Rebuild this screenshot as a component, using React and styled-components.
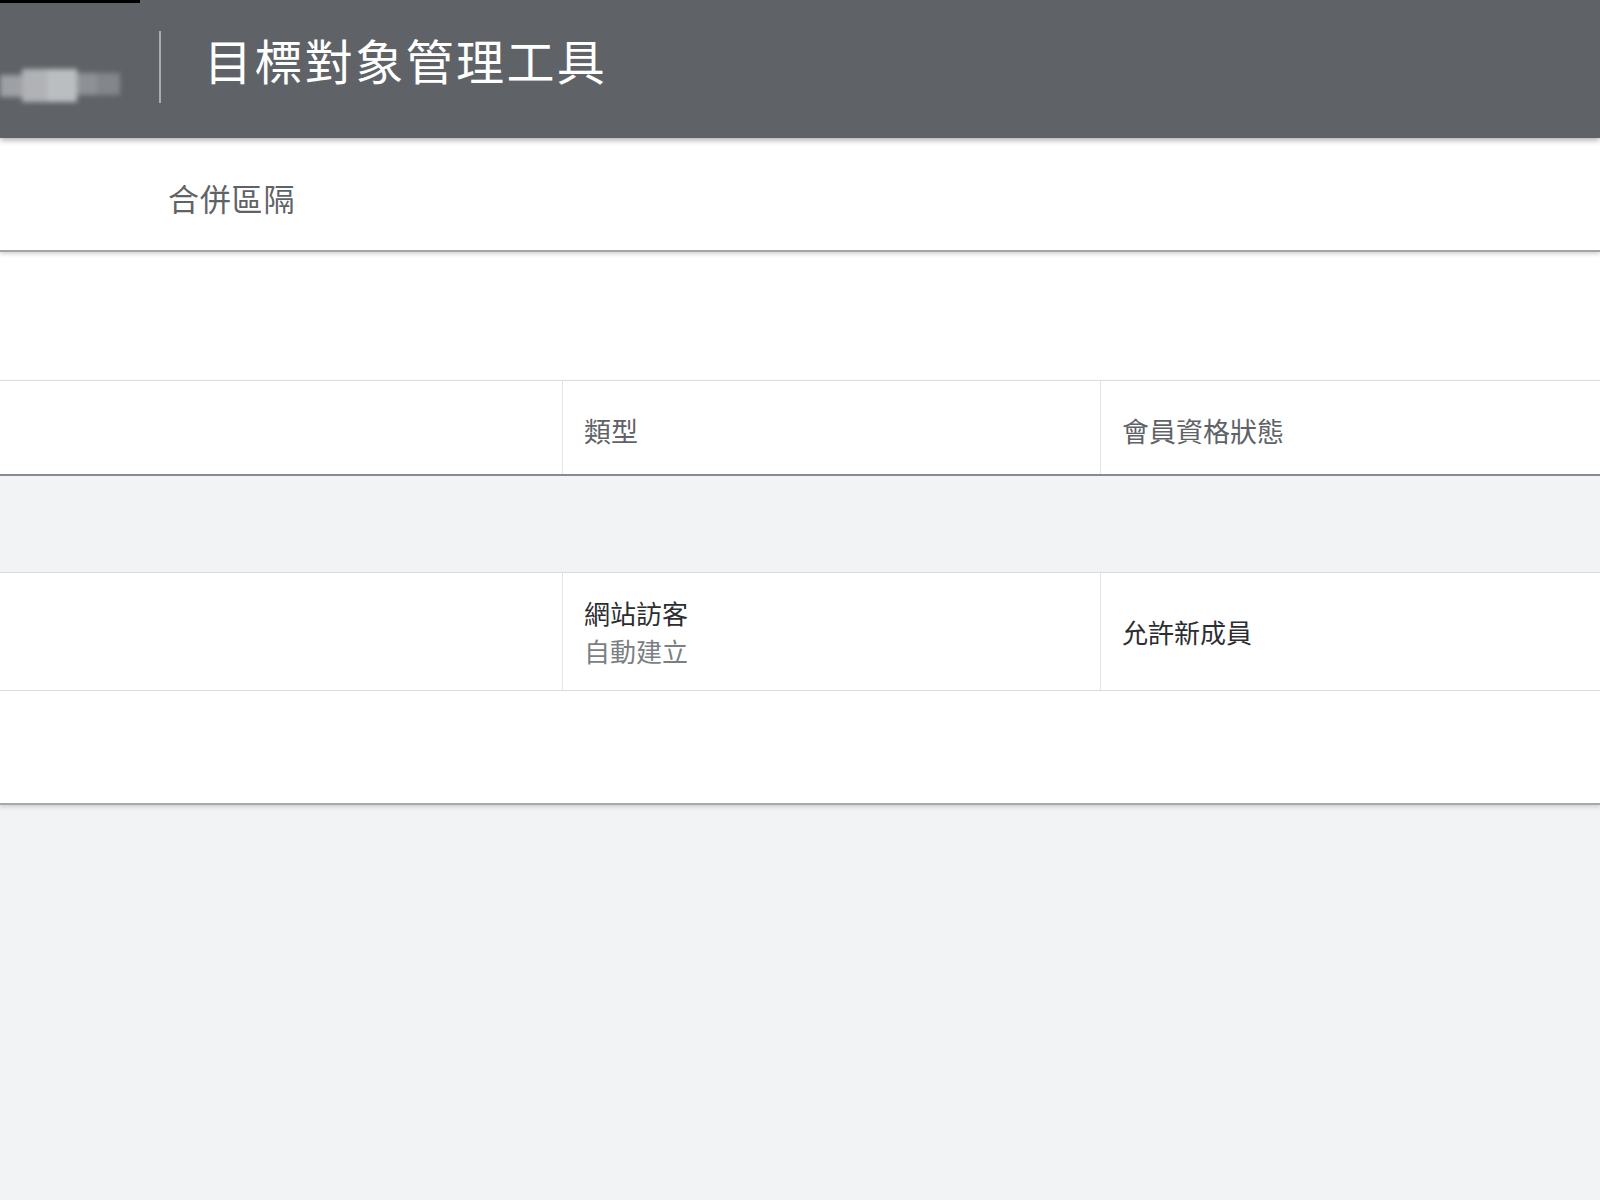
import React from "react";
import styled, { createGlobalStyle } from "styled-components";

const Global = createGlobalStyle`
  html, body { margin: 0; padding: 0; background: #f1f3f4; }
  body { font-family: "Noto Sans CJK TC", "Noto Sans", Roboto, sans-serif; }
  * { box-sizing: border-box; }
`;

const Page = styled.div`
  min-height: 1200px;
  background: #f1f3f4;
  display: flex;
  flex-direction: column;
`;

const Header = styled.header`
  position: relative;
  z-index: 3;
  height: 138px;
  background: #5f6368;
  display: flex;
  align-items: flex-start;
  box-shadow: 0 2px 6px rgba(0, 0, 0, 0.35);
`;

const TopStrip = styled.div`
  position: absolute;
  left: 0;
  top: 0;
  width: 140px;
  height: 3px;
  background: #000;
`;

const BlurLogo = styled.div`
  margin-top: 69px;
  width: 120px;
  height: 33px;
  display: flex;
  filter: blur(2.5px);
  opacity: 0.9;
`;

const LogoBlock = styled.span`
  flex: ${(p) => p.$w} 0 0;
  background: ${(p) => p.$c};
  margin-top: ${(p) => p.$t || 0}px;
  height: ${(p) => p.$h || 33}px;
`;

const Divider = styled.div`
  margin-top: 31px;
  margin-left: 39px;
  width: 2px;
  height: 72px;
  background: #a9acb0;
`;

const Title = styled.h1`
  margin: 31px 0 0 43px;
  font-size: 48px;
  line-height: 56px;
  font-weight: 400;
  color: #ffffff;
  letter-spacing: 2.4px;
`;

const SubBar = styled.div`
  position: relative;
  z-index: 2;
  height: 114px;
  background: #fff;
  display: flex;
  align-items: center;
  padding: 6px 0 0 168px;
  border-bottom: 2px solid #a3a3a3;
  box-shadow: 0 2px 4px rgba(0, 0, 0, 0.18);
`;

const SubTitle = styled.span`
  font-size: 31px;
  letter-spacing: 0.8px;
  color: #5f6368;
`;

const Card = styled.section`
  background: #fff;
  border-bottom: 2px solid #a8a8a8;
  box-shadow: 0 2px 4px rgba(0, 0, 0, 0.15);
  padding-top: 128px;
  padding-bottom: 112px;
`;

const Table = styled.div`
  border-top: 1px solid #dadce0;
  display: flex;
  flex-direction: column;
`;

const Row = styled.div`
  display: grid;
  grid-template-columns: 562px 538px 1fr;
  height: ${(p) => p.$h}px;
  background: ${(p) => p.$bg || "#fff"};
  border-bottom: ${(p) => p.$border};
`;

const Cell = styled.div`
  border-left: ${(p) => (p.$first ? "none" : "1px solid #e3e4e6")};
  padding: ${(p) => p.$pad || "0 0 0 21px"};
  display: flex;
  flex-direction: column;
  justify-content: center;
`;

const HeadText = styled.span`
  font-size: 27px;
  color: #5f6368;
`;

const Primary = styled.span`
  font-size: 26px;
  line-height: 38px;
  color: #2b2d30;
`;

const Secondary = styled.span`
  font-size: 26px;
  line-height: 38px;
  color: #7b7f84;
`;

const GrayBand = styled.div`
  height: 97px;
  background: #f1f3f4;
  border-bottom: 1px solid #dadce0;
`;

export default function App() {
  return (
    <Page>
      <Global />
      <Header>
        <TopStrip />
        <BlurLogo>
          <LogoBlock $w={22} $c="#a4a7ab" $h={22} $t={6} />
          <LogoBlock $w={25} $c="#b9bbbe" />
          <LogoBlock $w={30} $c="#c6c8ca" />
          <LogoBlock $w={20} $c="#93979b" $h={22} $t={4} />
          <LogoBlock $w={23} $c="#878b90" $h={22} $t={4} />
        </BlurLogo>
        <Divider />
        <Title>目標對象管理工具</Title>
      </Header>
      <SubBar>
        <SubTitle>合併區隔</SubTitle>
      </SubBar>
      <Card>
        <Table>
          <Row $h={95} $border="2px solid #868a8f">
            <Cell $first />
            <Cell $pad="6px 0 0 21px">
              <HeadText>類型</HeadText>
            </Cell>
            <Cell $pad="6px 0 0 21px">
              <HeadText>會員資格狀態</HeadText>
            </Cell>
          </Row>
          <GrayBand />
          <Row $h={118} $border="1px solid #dadce0">
            <Cell $first />
            <Cell $pad="0 0 0 21px">
              <Primary>網站訪客</Primary>
              <Secondary>自動建立</Secondary>
            </Cell>
            <Cell $pad="0 0 0 21px">
              <Primary>允許新成員</Primary>
            </Cell>
          </Row>
        </Table>
      </Card>
    </Page>
  );
}
